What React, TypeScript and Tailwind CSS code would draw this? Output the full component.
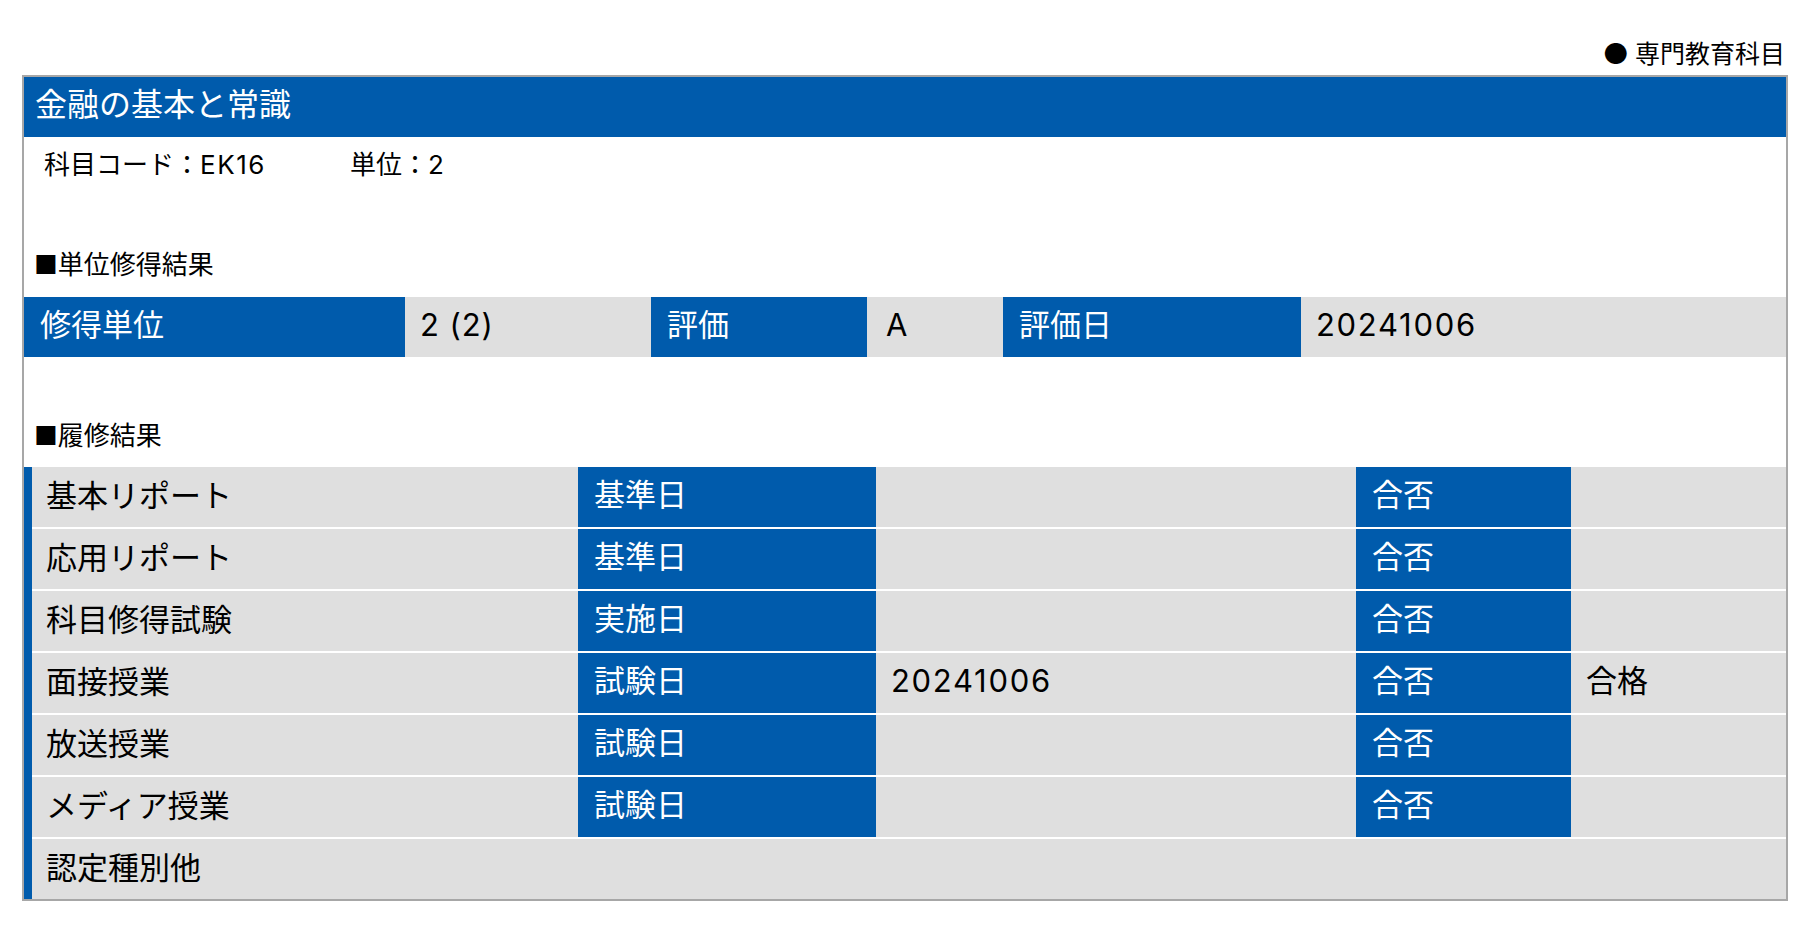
const BLUE = 'bg-[#005bac]';

type ResultRow = {
  label: string;
  dateLabel: string;
  date: string;
  judgeLabel: string;
  judge: string;
};

const rows: ResultRow[] = [
  { label: '基本リポート', dateLabel: '基準日', date: '', judgeLabel: '合否', judge: '' },
  { label: '応用リポート', dateLabel: '基準日', date: '', judgeLabel: '合否', judge: '' },
  { label: '科目修得試験', dateLabel: '実施日', date: '', judgeLabel: '合否', judge: '' },
  { label: '面接授業', dateLabel: '試験日', date: '20241006', judgeLabel: '合否', judge: '合格' },
  { label: '放送授業', dateLabel: '試験日', date: '', judgeLabel: '合否', judge: '' },
  { label: 'メディア授業', dateLabel: '試験日', date: '', judgeLabel: '合否', judge: '' },
];

function HeadCell({ children, className = '' }: { children: React.ReactNode; className?: string }) {
  return (
    <div className={`${BLUE} flex items-center text-white pl-[16px] pb-[5px] ${className}`}>{children}</div>
  );
}

function ValueCell({ children, className = '' }: { children?: React.ReactNode; className?: string }) {
  return <div className={`bg-[#dfdfdf] flex items-center pl-[15px] pb-[5px] ${className}`}>{children}</div>;
}

export default function App() {
  return (
    <div className="w-full min-h-[930px] bg-white text-black font-['Inter','Noto_Sans_CJK_JP',sans-serif] pt-[38px] pl-[22px] pr-[24px]">
      <div className="flex justify-end items-center h-[32px] leading-[32px] text-[25px] mb-[5px] pr-[3px]">
        <span className="text-[29px] mr-[6px]">●</span>
        <span>専門教育科目</span>
      </div>

      <div className="border-2 border-[#a7a7a7]">
        <div className={`${BLUE} h-[60px] flex items-center pl-[11px] pb-[4px] text-white text-[32px] leading-none`}>
          金融の基本と常識
        </div>

        <div className="flex pt-[10px] pl-[20px] text-[26px] leading-[36px]">
          <span className="w-[306px]">
            科目コード：<span className="tracking-[0.06em]">EK16</span>
          </span>
          <span>単位：2</span>
        </div>

        <div className="mt-[64px] mb-[14px] pl-[10px] text-[26px] leading-[36px]">■単位修得結果</div>

        <div className="flex h-[60px] text-[31px] leading-none">
          <HeadCell className="w-[381px] pl-[14px]">修得単位</HeadCell>
          <ValueCell className="w-[246px] tracking-[0.03em]">2 (2)</ValueCell>
          <HeadCell className="w-[216px] pl-[15px]">評価</HeadCell>
          <ValueCell className="w-[136px] pl-[19px]">A</ValueCell>
          <HeadCell className="w-[298px] pl-[15px]">評価日</HeadCell>
          <ValueCell className="flex-1 tracking-[0.055em]">20241006</ValueCell>
        </div>

        <div className="mt-[61px] mb-[13px] pl-[10px] text-[26px] leading-[36px]">■履修結果</div>

        <div className="flex text-[31px] leading-none">
          <div className={`${BLUE} w-[8px] shrink-0`} />
          <div className="flex-1 flex flex-col gap-[2px] bg-white">
            {rows.map((row) => (
              <div key={row.label} className="flex h-[60px]">
                <div className="w-[546px] bg-[#dfdfdf] flex items-center pl-[14px] pb-[4px]">{row.label}</div>
                <HeadCell className="w-[298px]">{row.dateLabel}</HeadCell>
                <ValueCell className="w-[480px] tracking-[0.055em]">{row.date}</ValueCell>
                <HeadCell className="w-[215px]">{row.judgeLabel}</HeadCell>
                <ValueCell className="flex-1">{row.judge}</ValueCell>
              </div>
            ))}
            <div className="flex h-[60px] bg-[#dfdfdf] items-center pl-[14px] pb-[4px]">認定種別他</div>
          </div>
        </div>
      </div>
    </div>
  );
}
